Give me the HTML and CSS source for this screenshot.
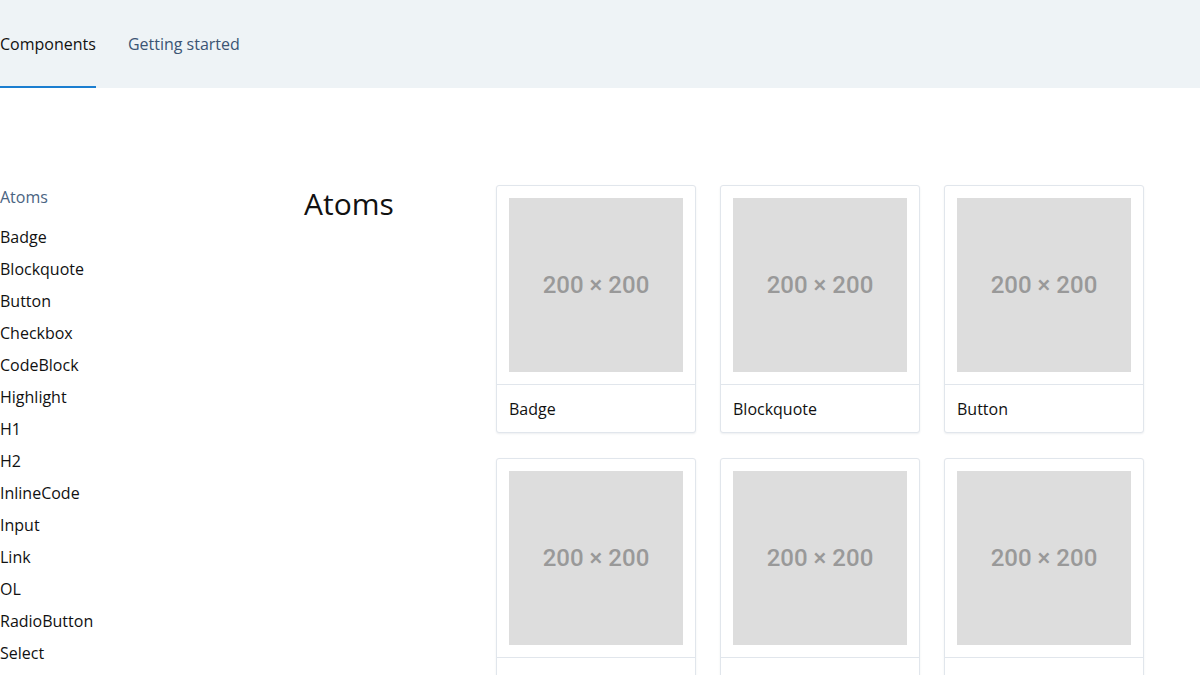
FILE: index.html
```html
<!DOCTYPE html>
<html lang="en">

<head>
    <meta charset="UTF-8">
    <meta name="viewport" content="width=device-width, initial-scale=1.0">
    <title>Components</title>
    <link rel="stylesheet" href="styles.css">
</head>

<body>
    <header class="topbar">
        <nav class="tabs">
            <a class="tab active">Components</a>
            <a class="tab">Getting started</a>
        </nav>
    </header>

    <div class="layout">
        <aside class="sidebar">
            <div class="side-title">Atoms</div>
            <ul class="side-list">
                <li>Badge</li>
                <li>Blockquote</li>
                <li>Button</li>
                <li>Checkbox</li>
                <li>CodeBlock</li>
                <li>Highlight</li>
                <li>H1</li>
                <li>H2</li>
                <li>InlineCode</li>
                <li>Input</li>
                <li>Link</li>
                <li>OL</li>
                <li>RadioButton</li>
                <li>Select</li>
            </ul>
        </aside>

        <section class="group">
            <h2 class="group-title">Atoms</h2>
            <div class="grid">
                <div class="card">
                    <div class="thumb-wrap"><div class="thumb">200 × 200</div></div>
                    <div class="card-name">Badge</div>
                </div>
                <div class="card">
                    <div class="thumb-wrap"><div class="thumb">200 × 200</div></div>
                    <div class="card-name">Blockquote</div>
                </div>
                <div class="card">
                    <div class="thumb-wrap"><div class="thumb">200 × 200</div></div>
                    <div class="card-name">Button</div>
                </div>
                <div class="card">
                    <div class="thumb-wrap"><div class="thumb">200 × 200</div></div>
                    <div class="card-name">Checkbox</div>
                </div>
                <div class="card">
                    <div class="thumb-wrap"><div class="thumb">200 × 200</div></div>
                    <div class="card-name">CodeBlock</div>
                </div>
                <div class="card">
                    <div class="thumb-wrap"><div class="thumb">200 × 200</div></div>
                    <div class="card-name">Highlight</div>
                </div>
            </div>
        </section>
    </div>
</body>

</html>
```

FILE: styles.css
```css
body {
    margin: 0;
    padding: 0;
    font-family: "Open Sans", sans-serif;
    color: #111;
    background-color: #fff;
}

.topbar {
    height: 88px;
    background-color: #eef3f6;
}

.tabs {
    display: flex;
    gap: 32px;
    height: 100%;
}

.tab {
    display: flex;
    align-items: center;
    height: 88px;
    box-sizing: border-box;
    font-size: 16px;
    color: #3b5574;
    border-bottom: 2px solid transparent;
    padding-top: 2px;
}

.tab.active {
    color: #111;
    border-bottom-color: #1b7ed0;
}

.layout {
    display: flex;
    padding-top: 97px;
}

.sidebar {
    width: 304px;
    flex-shrink: 0;
}

.side-title {
    font-size: 16px;
    line-height: 24px;
    color: #4a6482;
    margin-bottom: 16px;
}

.side-list {
    list-style: none;
    margin: 0;
    padding: 0;
}

.side-list li {
    font-size: 16px;
    line-height: 24px;
    margin-bottom: 8px;
}

.group {
    display: flex;
}

.group-title {
    width: 192px;
    margin: 0;
    font-size: 30px;
    font-weight: 400;
    line-height: 38px;
}

.grid {
    display: grid;
    grid-template-columns: repeat(3, 200px);
    column-gap: 24px;
    row-gap: 25px;
}

.card {
    width: 200px;
    box-sizing: border-box;
    border: 1px solid #e1e6ec;
    border-radius: 3px;
    box-shadow: 0 1px 2px rgba(30, 50, 80, 0.08);
    background-color: #fff;
}

.thumb-wrap {
    padding: 12px;
    border-bottom: 1px solid #e1e6ec;
}

.thumb {
    width: 174px;
    height: 174px;
    background-color: #dddddd;
    color: #999999;
    font-family: Roboto, "Liberation Sans", sans-serif;
    font-weight: 500;
    font-size: 24px;
    display: flex;
    align-items: center;
    justify-content: center;
}

.card-name {
    height: 47px;
    display: flex;
    align-items: center;
    padding-left: 12px;
    font-size: 16px;
}
```
